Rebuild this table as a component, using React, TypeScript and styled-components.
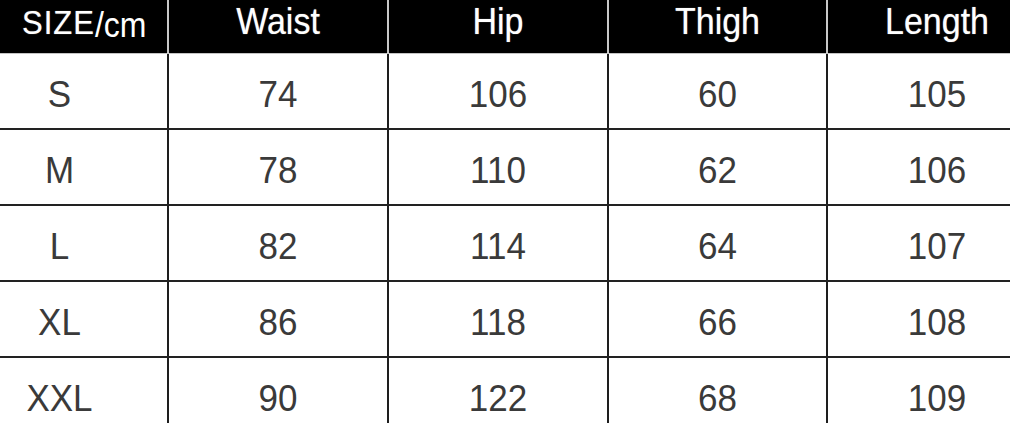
import React from 'react';
import styled, { createGlobalStyle } from 'styled-components';

const Global = createGlobalStyle`
  html, body { margin: 0; padding: 0; background: #fff; overflow: hidden; }
  body { font-family: "Liberation Sans", Arial, sans-serif; }
`;

const COLS = '217px 220px 220px 219px 220px';

const Viewport = styled.div`
  width: 1010px;
  height: 423px;
  overflow: hidden;
  background: #fff;
`;

const Table = styled.div`
  margin-left: -48px;
  width: 1096px;
  display: flex;
  flex-direction: column;
`;

const HeadRow = styled.div`
  display: grid;
  grid-template-columns: ${COLS};
  height: 54px;
  box-sizing: border-box;
  background: #000;
  border-bottom: 1px solid #c4c4c4;
`;

const HeadCell = styled.div<{ $first?: boolean }>`
  display: flex;
  align-items: flex-start;
  justify-content: ${(p) => (p.$first ? 'flex-start' : 'center')};
  padding-left: ${(p) => (p.$first ? '70px' : '0')};
  padding-top: 6px;
  box-sizing: border-box;
  border-right: 2px solid #c8c8c8;
  color: #fff;
  font-size: 34px;
  line-height: 32px;
  text-shadow: 0 0 1px rgba(255, 255, 255, 0.6);
`;

const HeadText = styled.span`
  display: inline-block;
  transform: scaleY(1.1);
  transform-origin: 50% 85%;
`;

const SizeWord = styled.span`
  font-size: 31px;
  letter-spacing: 1px;
`;

const Unit = styled.span`
  font-size: 32px;
  position: relative;
  top: 3px;
  text-shadow: none;
`;

const Row = styled.div`
  display: grid;
  grid-template-columns: ${COLS};
  height: 76px;
  box-sizing: border-box;
  border-bottom: 2px solid #222;
`;

const Cell = styled.div`
  display: flex;
  align-items: center;
  justify-content: center;
  border-right: 2px solid #1e1e1e;
  color: #3a3a3a;
  font-size: 35px;
  line-height: 35px;
  padding-top: 4px;
  box-sizing: border-box;
`;

const CellText = styled.span`
  display: inline-block;
  transform: scaleY(1.08);
`;

const headers = ['Waist', 'Hip', 'Thigh', 'Length'];
const rows: [string, number, number, number, number][] = [
  ['S', 74, 106, 60, 105],
  ['M', 78, 110, 62, 106],
  ['L', 82, 114, 64, 107],
  ['XL', 86, 118, 66, 108],
  ['XXL', 90, 122, 68, 109],
];

export default function App() {
  return (
    <Viewport>
      <Global />
      <Table>
        <HeadRow>
          <HeadCell $first>
            <HeadText>
              <SizeWord>SIZE</SizeWord>
              <Unit>/cm</Unit>
            </HeadText>
          </HeadCell>
          {headers.map((h) => (
            <HeadCell key={h}>
              <HeadText>{h}</HeadText>
            </HeadCell>
          ))}
        </HeadRow>
        {rows.map((r) => (
          <Row key={r[0]}>
            {r.map((v, i) => (
              <Cell key={i}>
                <CellText>{v}</CellText>
              </Cell>
            ))}
          </Row>
        ))}
      </Table>
    </Viewport>
  );
}
